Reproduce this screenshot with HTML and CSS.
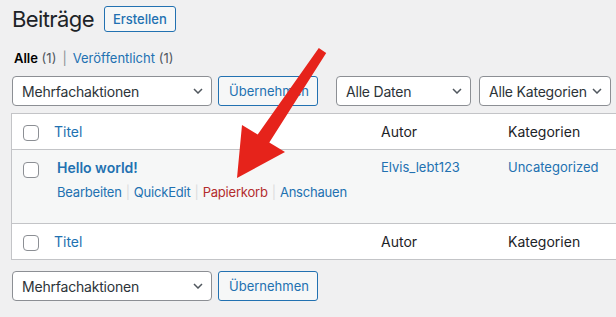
FILE: index.html
```html
<!DOCTYPE html>
<html>
<head>
    <title>Beiträge</title>
    <link rel="stylesheet" href="styles.css">
</head>
<body>

    <div class="wrap">
        <div class="page-head">
            <h1>Beiträge</h1>
            <a class="title-action" href="#">Erstellen</a>
        </div>

        <ul class="subsubsub">
            <li><a class="current" href="#">Alle</a> <span class="count">(1)</span></li>
            <li class="sep">|</li>
            <li><a href="#">Veröffentlicht <span class="count">(1)</span></a></li>
        </ul>

        <div class="tablenav">
            <div class="select select-bulk">
                <span>Mehrfachaktionen</span>
                <svg viewBox="0 0 10 6" width="10" height="6"><path d="M1 1l4 4 4-4" fill="none" stroke="#50575e" stroke-width="1.5"/></svg>
            </div>
            <button class="button">Übernehmen</button>
            <div class="select select-date">
                <span>Alle Daten</span>
                <svg viewBox="0 0 10 6" width="10" height="6"><path d="M1 1l4 4 4-4" fill="none" stroke="#50575e" stroke-width="1.5"/></svg>
            </div>
            <div class="select select-cat">
                <span>Alle Kategorien</span>
                <svg viewBox="0 0 10 6" width="10" height="6"><path d="M1 1l4 4 4-4" fill="none" stroke="#50575e" stroke-width="1.5"/></svg>
            </div>
        </div>

        <table class="posts">
            <colgroup>
                <col class="col-check">
                <col class="col-title">
                <col class="col-author">
                <col class="col-cat">
                <col>
            </colgroup>
            <thead>
                <tr>
                    <th class="check"><span class="checkbox"></span></th>
                    <th><a href="#">Titel</a></th>
                    <th>Autor</th>
                    <th>Kategorien</th>
                    <th></th>
                </tr>
            </thead>
            <tbody>
                <tr>
                    <td class="check"><span class="checkbox"></span></td>
                    <td class="title">
                        <a class="row-title" href="#">Hello world!</a>
                        <div class="row-actions">
                            <a href="#">Bearbeiten</a><span class="bar">|</span><a href="#">QuickEdit</a><span class="bar">|</span><a class="trash" href="#">Papierkorb</a><span class="bar">|</span><a href="#">Anschauen</a>
                        </div>
                    </td>
                    <td><a href="#">Elvis_lebt123</a></td>
                    <td><a href="#">Uncategorized</a></td>
                    <td></td>
                </tr>
            </tbody>
            <tfoot>
                <tr>
                    <th class="check"><span class="checkbox"></span></th>
                    <th><a href="#">Titel</a></th>
                    <th>Autor</th>
                    <th>Kategorien</th>
                    <th></th>
                </tr>
            </tfoot>
        </table>

        <div class="tablenav bottom">
            <div class="select select-bulk">
                <span>Mehrfachaktionen</span>
                <svg viewBox="0 0 10 6" width="10" height="6"><path d="M1 1l4 4 4-4" fill="none" stroke="#50575e" stroke-width="1.5"/></svg>
            </div>
            <button class="button">Übernehmen</button>
        </div>
    </div>

    <!-- red marker arrow pointing at "Papierkorb" -->
    <svg class="arrow" viewBox="0 0 616 317" width="616" height="317">
        <polygon points="318.8,48 326.2,53 269.3,142.4 285,152 237,178 242,125 257.7,134.6" fill="#e6231b"/>
    </svg>

</body>
</html>
```

FILE: styles.css
```css
html,
body {
    overflow: hidden;
}

body {
    margin: 0;
    background-color: #f0f0f1;
    color: #3c434a;
    font-family: Inter, "Liberation Sans", sans-serif;
    font-size: 13px;
    position: relative;
    width: 616px;
    height: 317px;
}

a {
    color: #2271b1;
    text-decoration: none;
}

.wrap {
    padding: 4px 0 0 12px;
}

.page-head {
    display: flex;
    align-items: center;
    gap: 10px;
    height: 30px;
}

h1 {
    margin: 0;
    font-size: 22px;
    font-weight: 400;
    letter-spacing: -0.6px;
    line-height: 30px;
    color: #1d2327;
}

.title-action {
    display: flex;
    align-items: center;
    height: 24px;
    padding: 0 8px;
    border: 1px solid #2271b1;
    border-radius: 3px;
    background: #f6f7f7;
    font-weight: 500;
    font-size: 13px;
}

.subsubsub {
    list-style: none;
    margin: 11px 0 0 2px;
    padding: 0;
    display: flex;
    gap: 4px;
    height: 26px;
    line-height: 26px;
    color: #646970;
}

.subsubsub .current {
    color: #000;
    font-weight: 600;
}

.subsubsub .sep {
    margin: 0 2px;
    color: #8c8f94;
}

.count {
    color: #50575e;
}

.tablenav {
    display: flex;
    margin-top: 5px;
    height: 30px;
}

.tablenav.bottom {
    margin-top: 11px;
}

.select {
    display: flex;
    align-items: center;
    justify-content: space-between;
    box-sizing: border-box;
    height: 30px;
    padding: 0 8px 0 9px;
    border: 1px solid #8c8f94;
    border-radius: 4px;
    background: #fff;
    color: #2c3338;
    font-size: 14px;
    letter-spacing: -0.2px;
}

.select-bulk {
    width: 200px;
}

.select-date {
    width: 135px;
    margin-left: 18px;
}

.select-cat {
    width: 132px;
    margin-left: 8px;
}

.button {
    box-sizing: border-box;
    height: 30px;
    width: 100px;
    margin-left: 6px;
    padding: 0 10px;
    border: 1px solid #2271b1;
    border-radius: 3px;
    background: #f6f7f7;
    color: #2271b1;
    font-family: inherit;
    font-size: 13px;
}

.posts {
    margin: 7px 0 0 -1px;
    width: 720px;
    table-layout: fixed;
    border-collapse: separate;
    border-spacing: 0;
    border: 1px solid #c3c4c7;
    background: #fff;
}

.col-check {
    width: 32px;
}

.col-title {
    width: 327px;
}

.col-author {
    width: 127px;
}

.col-cat {
    width: 140px;
}

.posts thead tr,
.posts tfoot tr {
    height: 36px;
}

.posts tbody tr {
    height: 73px;
    background: #f6f7f7;
}

.posts th {
    padding: 0 10px;
    text-align: left;
    font-weight: 400;
    font-size: 14px;
    line-height: 17px;
    color: #1d2327;
    vertical-align: middle;
}

.posts thead th {
    border-bottom: 1px solid #c3c4c7;
}

.posts tfoot th {
    border-top: 1px solid #c3c4c7;
}

.posts .check {
    padding: 0 0 0 11px;
}

.posts th.check {
    padding-top: 3px;
}

.checkbox {
    display: block;
    box-sizing: border-box;
    width: 16px;
    height: 16px;
    border: 1px solid #8c8f94;
    border-radius: 4px;
    background: #fff;
}

.posts td {
    padding: 8px 10px 0;
    vertical-align: top;
    line-height: 19px;
}

.posts td.check {
    padding-top: 12px;
}

.row-title {
    display: block;
    font-size: 14px;
    font-weight: 600;
    line-height: 20px;
    padding-left: 3px;
}

.row-actions {
    margin-top: 4px;
    padding-left: 3px;
    line-height: 20px;
    letter-spacing: -0.2px;
}

.row-actions .bar {
    color: #dcdcde;
    margin: 0 4px;
}

.row-actions .trash {
    color: #b32d2e;
}

.arrow {
    position: absolute;
    top: 0;
    left: 0;
    pointer-events: none;
}
```
